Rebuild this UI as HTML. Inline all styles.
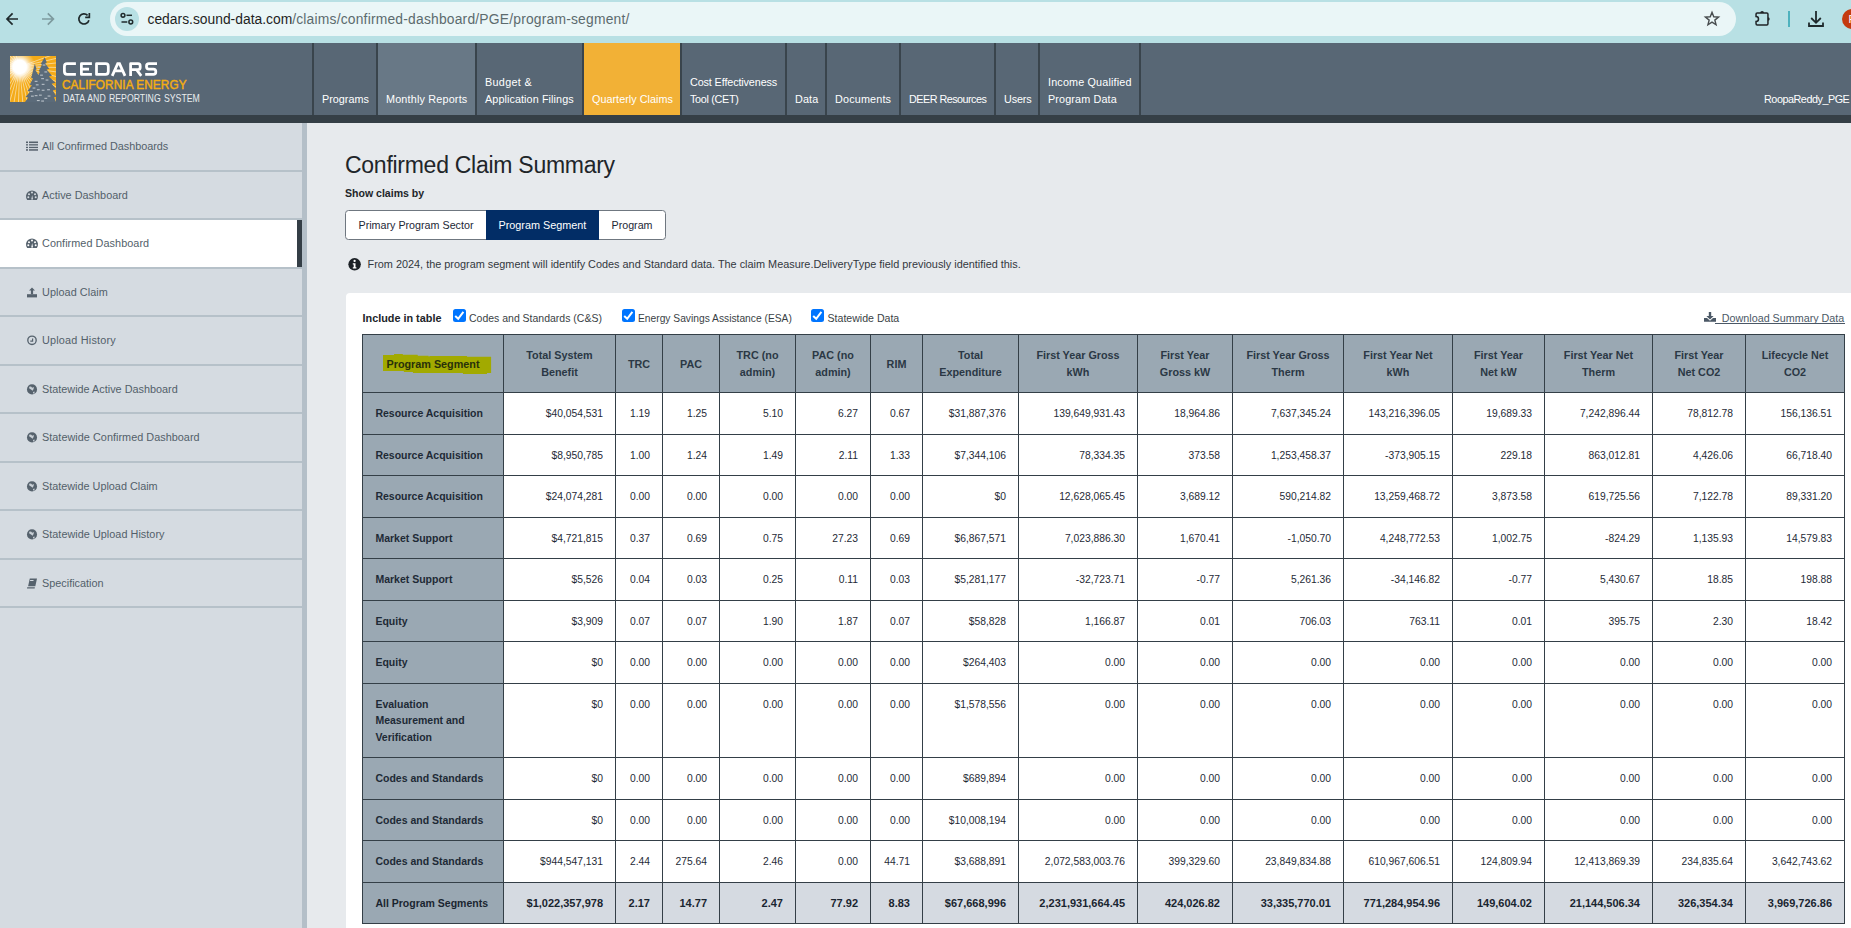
<!DOCTYPE html>
<html><head><meta charset="utf-8"><title>CEDARS - Confirmed Claim Summary</title>
<style>
*{box-sizing:border-box;margin:0;padding:0}
html,body{width:1851px;height:928px;overflow:hidden}
body{position:relative;background:#e7eaed;font-family:"Liberation Sans",sans-serif}
.a{position:absolute}
.t{position:absolute;white-space:nowrap;line-height:1}
svg{position:absolute;overflow:visible}
table.g{position:absolute;left:362px;top:334px;border-collapse:separate;border-spacing:0;table-layout:fixed;border-left:1px solid #343f47;border-top:1px solid #343f47;font-size:10.3px;color:#1e2a36}
table.g td,table.g th{border-right:1px solid #343f47;border-bottom:1px solid #343f47;padding:0;white-space:nowrap;overflow:hidden}
table.g th{background:#9aa8b3;font-weight:700;text-align:center;vertical-align:middle;line-height:17px;font-size:10.8px;color:#2b3845;padding-top:2px}
table.g th.two{padding-top:0}
table.g th:first-child{position:relative}
table.g td{text-align:right;vertical-align:top;line-height:17px;padding:11.76px 12px 0 0}
table.g td.h{background:#9aa8b3;font-weight:700;text-align:left;padding-left:12.4px;font-size:10.5px;color:#1e2a36;line-height:16.7px}
table.g tr.f td{background:#d5dae1;font-weight:700;font-size:11px;color:#1a2530}
table.g tr.f td.h{background:#9aa8b3;font-size:10.5px}
</style></head><body>

<div class="a" style="left:0px;top:0px;width:1851px;height:43px;background:#b8e0e4;"></div>
<div class="a" style="left:310px;top:34px;width:2px;height:2px;background:#1010ff;border-radius:1px;"></div>
<div class="a" style="left:110px;top:2px;width:1626px;height:34px;border-radius:17px;background:#eaf6f7"></div>
<svg style="left:0;top:0" width="100" height="42"><g fill="none" stroke-width="1.7"><path d="M7.2 19 H18 M12.6 13.4 L7 19 L12.6 24.6" stroke="#1f2a2c"/><path d="M42 19 H53.4 M47.8 13.4 L53.4 19 L47.8 24.6" stroke="#7d9a9e"/></g><g transform="translate(74 9)" fill="none" stroke="#1f2a2c" stroke-width="1.7"><path d="M13.6 6.3 A5.1 5.1 0 1 0 14.9 11.2"/><path d="M11.2 8.35 H15.35 V4.1"/></g></svg>
<div class="a" style="left:115px;top:7px;width:24px;height:24px;border-radius:12px;background:#b8e0e4"></div>
<svg style="left:115px;top:7px" width="24" height="24"><g fill="none" stroke="#1f2a2c" stroke-width="1.5"><circle cx="8" cy="8.3" r="1.9"/><path d="M11.5 8.3 H17"/><circle cx="15.8" cy="15" r="1.9"/><path d="M6.5 15 H12.3"/></g></svg>
<div class="t" style="left:147.50px;top:13.20px;font-size:13.85px;color:#1f1f1f;"><span style="color:#1f1f1f">cedars.sound-data.com</span><span style="color:#5c6b6e;letter-spacing:0.2px">/claims/confirmed-dashboard/PGE/program-segment/</span></div>
<svg style="left:1702px;top:9px" width="20" height="20"><polygon points="10.00,3.30 11.76,7.77 16.56,8.07 12.85,11.13 14.06,15.78 10.00,13.20 5.94,15.78 7.15,11.13 3.44,8.07 8.24,7.77" fill="none" stroke="#474c4e" stroke-width="1.4" stroke-linejoin="miter"/></svg>
<svg style="left:1750px;top:6px" width="25" height="25"><path d="M7.2 6.9 H16.8 Q17.95 6.9 17.95 8.05 V17.75 Q17.95 18.9 16.8 18.9 H7.2 Q6.05 18.9 6.05 17.75 V15.4 A2.45 2.45 0 0 0 6.05 10.5 V8.05 Q6.05 6.9 7.2 6.9 Z" fill="none" stroke="#1f2326" stroke-width="1.5"/><path d="M10.2 6.9 A1.9 1.9 0 0 1 14 6.9 Z M17.95 11.15 A1.75 1.75 0 0 1 17.95 14.65 Z" fill="#1f2326"/></svg>
<div class="a" style="left:1788px;top:11px;width:2px;height:16px;background:#4eb2be;"></div>
<svg style="left:1806px;top:9px" width="20" height="20"><g fill="none" stroke="#1f2a2c" stroke-width="1.8"><path d="M10 2 V13.5 M5.2 9 L10 13.8 L14.8 9"/><path d="M3 13.5 V17 H17 V13.5"/></g></svg>
<div class="a" style="left:1842px;top:9px;width:20px;height:20px;border-radius:10px;background:#c43a0f"></div>
<div class="t" style="left:1848.60px;top:13.68px;font-size:10.8px;color:#fff;">R</div>
<div class="a" style="left:0px;top:43px;width:1851px;height:72px;background:#586775;"></div>
<div class="a" style="left:0px;top:115px;width:1851px;height:8px;background:#353f46;"></div>
<svg style="left:10px;top:56px" width="46" height="46" viewBox="0 0 46 46">
<defs><radialGradient id="sun" cx="9.7" cy="10.8" r="16" gradientUnits="userSpaceOnUse"><stop offset="0" stop-color="#fff"/><stop offset="0.42" stop-color="#fff"/><stop offset="0.7" stop-color="#fff" stop-opacity="0.45"/><stop offset="1" stop-color="#fff" stop-opacity="0"/></radialGradient>
<clipPath id="lc"><rect width="46" height="46"/></clipPath></defs>
<g clip-path="url(#lc)">
<rect width="46" height="46" fill="#f4ab18"/>
<path d="M9.7 10.8 L75.5 -13.1 M9.7 10.8 L77.9 -4.9 M9.7 10.8 L79.3 3.5 M9.7 10.8 L79.7 12.0 M9.7 10.8 L79.0 20.5 M9.7 10.8 L77.3 28.9 M9.7 10.8 L74.6 37.0 M9.7 10.8 L70.9 44.7 M9.7 10.8 L66.3 51.9 M9.7 10.8 L60.9 58.5 M9.7 10.8 L54.7 64.4 M9.7 10.8 L47.8 69.5 M9.7 10.8 L40.4 73.7 M9.7 10.8 L32.5 77.0 M9.7 10.8 L24.3 79.3 M9.7 10.8 L15.8 80.5 M9.7 10.8 L7.3 80.8 M9.7 10.8 L-1.3 79.9 M9.7 10.8 L-9.6 78.1 M9.7 10.8 L-17.7 75.2 M9.7 10.8 L-25.3 71.4 M9.7 10.8 L-37.1 62.8 M9.7 10.8 L-46.9 51.9 M9.7 10.8 L-54.2 39.3 M9.7 10.8 L-58.8 25.4 M9.7 10.8 L-60.3 10.8 M9.7 10.8 L-58.8 -3.8 M9.7 10.8 L-54.2 -17.7 M9.7 10.8 L-46.9 -30.3 M9.7 10.8 L-37.1 -41.2 M9.7 10.8 L-25.3 -49.8 M9.7 10.8 L-11.9 -55.8" stroke="#fff" stroke-width="0.9" opacity="0.55"/>
<rect width="46" height="46" fill="url(#sun)"/>
<path d="M34.7 1.2 L36.8 6.5 L35.2 7.4 L39.2 12.8 L36.6 13.6 L42 19.8 L38.8 20.6 L45.5 26.8 L41.6 27.8 L46.5 33.4 L42.8 34.6 L46.5 40.5 L44 41.2 L46 46 L15 46 L18.2 41.6 L15.6 41 L20.2 35.6 L17.6 35 L21.8 29.4 L19.8 28.6 L23 22.6 L21.2 22 L24.8 7.8 L26.6 13.2 L25.4 14 L28.4 19 L29.8 15.8 L28.8 15 L32 8.6 L30.8 8 Z" fill="#5b6b7a"/>
<g fill="#c9d0d6" opacity="0.85"><rect x="30.1" y="18.6" width="2.8" height="1.1"/><rect x="31.2" y="22.1" width="2.8" height="1.1"/><rect x="24.7" y="24.8" width="2.8" height="1.1"/><rect x="34.4" y="15.4" width="2.8" height="1.1"/><rect x="25.8" y="28.3" width="2.8" height="1.1"/><rect x="31.7" y="27.8" width="2.8" height="1.1"/><rect x="26.9" y="33.2" width="2.8" height="1.1"/><rect x="31.7" y="33.7" width="2.8" height="1.1"/><rect x="37.1" y="33.2" width="2.8" height="1.1"/><rect x="21.0" y="39.6" width="2.8" height="1.1"/><rect x="24.7" y="39.1" width="2.8" height="1.1"/><rect x="29.0" y="38.6" width="2.8" height="1.1"/><rect x="34.4" y="41.8" width="2.8" height="1.1"/><rect x="26.9" y="44.0" width="2.8" height="1.1"/><rect x="31.2" y="44.5" width="2.8" height="1.1"/><rect x="19.9" y="34.8" width="2.8" height="1.1"/><rect x="35.6" y="23.5" width="2.8" height="1.1"/><rect x="22.6" y="31.5" width="2.8" height="1.1"/><rect x="37.6" y="39.5" width="2.8" height="1.1"/><rect x="27.6" y="10.5" width="2.8" height="1.1"/><rect x="32.6" y="8.5" width="2.8" height="1.1"/></g>
</g></svg>
<svg style="left:63px;top:62px" width="96" height="15"><g fill="none" stroke="#fff" stroke-width="2.75" stroke-linejoin="round"><path d="M12.9 1.7 H4.2 Q1.4 1.7 1.4 4.5 V9.6 Q1.4 12.4 4.2 12.4 H12.9"/><path d="M28.9 1.7 H18.4 V12.4 H28.9 M18.4 7.05 H26"/><path d="M33.5 1.7 H42.6 Q45.3 1.7 45.3 4.5 V9.6 Q45.3 12.4 42.6 12.4 H33.5 Z"/><path d="M49.2 13.9 L54.7 1.7 H56.5 L62 13.9 M51.6 8.9 H59.6" stroke-linejoin="miter"/><path d="M67.6 13.9 V1.7 H75 Q77.2 1.7 77.2 4 V5.4 Q77.2 7.6 75 7.6 H67.6 M73.5 7.6 L78.2 13.9"/><path d="M94 1.7 H86 Q83.5 1.7 83.5 4.1 V4.8 Q83.5 7.05 86 7.05 H90.3 Q92.8 7.05 92.8 9.5 V10 Q92.8 12.4 90.3 12.4 H82.2"/></g></svg>
<div class="t" style="left:62.00px;top:79.13px;font-size:12.6px;color:#f4ad12;-webkit-text-stroke:0.45px #f4ad12;letter-spacing:0.1px;transform:scaleX(0.935);transform-origin:0 0;">CALIFORNIA ENERGY</div>
<div class="t" style="left:62.60px;top:94.07px;font-size:10.4px;color:#e9ecee;word-spacing:1px;transform:scaleX(0.84);transform-origin:0 0;">DATA AND REPORTING SYSTEM</div>
<div class="t" style="left:322.00px;top:93.98px;font-size:10.8px;color:#ffffff;letter-spacing:0.000px;">Programs</div>
<div class="a" style="left:378px;top:43px;width:97px;height:72px;background:#687886;"></div>
<div class="t" style="left:386.00px;top:93.98px;font-size:10.8px;color:#ffffff;letter-spacing:0.186px;">Monthly Reports</div>
<div class="t" style="left:485.00px;top:76.98px;font-size:10.8px;color:#ffffff;letter-spacing:0.329px;">Budget &amp;</div>
<div class="t" style="left:485.00px;top:93.98px;font-size:10.8px;color:#ffffff;letter-spacing:0.089px;">Application Filings</div>
<div class="a" style="left:584px;top:43px;width:96px;height:72px;background:#f2b136;"></div>
<div class="t" style="left:592.00px;top:93.98px;font-size:10.8px;color:#ffffff;letter-spacing:0.027px;">Quarterly Claims</div>
<div class="t" style="left:690.00px;top:76.98px;font-size:10.8px;color:#ffffff;letter-spacing:-0.118px;">Cost Effectiveness</div>
<div class="t" style="left:690.00px;top:93.98px;font-size:10.8px;color:#ffffff;letter-spacing:-0.300px;">Tool (CET)</div>
<div class="t" style="left:795.00px;top:93.98px;font-size:10.8px;color:#ffffff;letter-spacing:0.133px;">Data</div>
<div class="t" style="left:835.00px;top:93.98px;font-size:10.8px;color:#ffffff;letter-spacing:0.175px;">Documents</div>
<div class="t" style="left:909.00px;top:93.98px;font-size:10.8px;color:#ffffff;letter-spacing:-0.523px;">DEER Resources</div>
<div class="t" style="left:1004.00px;top:93.98px;font-size:10.8px;color:#ffffff;letter-spacing:-0.150px;">Users</div>
<div class="t" style="left:1048.00px;top:76.98px;font-size:10.8px;color:#ffffff;letter-spacing:0.160px;">Income Qualified</div>
<div class="t" style="left:1048.00px;top:93.98px;font-size:10.8px;color:#ffffff;letter-spacing:0.136px;">Program Data</div>
<div class="a" style="left:312px;top:43px;width:2px;height:72px;background:#39444c;"></div>
<div class="a" style="left:376px;top:43px;width:2px;height:72px;background:#39444c;"></div>
<div class="a" style="left:475px;top:43px;width:2px;height:72px;background:#39444c;"></div>
<div class="a" style="left:582px;top:43px;width:2px;height:72px;background:#39444c;"></div>
<div class="a" style="left:680px;top:43px;width:2px;height:72px;background:#39444c;"></div>
<div class="a" style="left:785px;top:43px;width:2px;height:72px;background:#39444c;"></div>
<div class="a" style="left:825px;top:43px;width:2px;height:72px;background:#39444c;"></div>
<div class="a" style="left:899px;top:43px;width:2px;height:72px;background:#39444c;"></div>
<div class="a" style="left:994px;top:43px;width:2px;height:72px;background:#39444c;"></div>
<div class="a" style="left:1038px;top:43px;width:2px;height:72px;background:#39444c;"></div>
<div class="a" style="left:1139px;top:43px;width:2px;height:72px;background:#39444c;"></div>
<div class="t" style="left:1764.00px;top:93.98px;font-size:10.8px;color:#ffffff;letter-spacing:-0.462px;">RoopaReddy_PGE</div>
<div class="a" style="left:0px;top:123px;width:302px;height:805px;background:#d5dbe1;"></div>
<div class="a" style="left:302px;top:123px;width:5px;height:805px;background:#b4bfc8;"></div>
<div class="a" style="left:0px;top:170px;width:302px;height:2px;background:#b6c1c9;"></div>
<div class="t" style="left:42.00px;top:140.99px;font-size:10.85px;color:#535f6a;letter-spacing:-0.013px;">All Confirmed Dashboards</div>
<svg style="left:26px;top:140.5px" width="12" height="11"><g fill="#56626d"><rect x="0" y="0.5" width="2" height="1.6"/><rect x="3" y="0.5" width="9" height="1.6"/><rect x="0" y="3.2" width="2" height="1.3"/><rect x="3" y="3.2" width="9" height="1.3"/><rect x="0" y="5.8" width="2" height="1.3"/><rect x="3" y="5.8" width="9" height="1.3"/><rect x="0" y="8.2" width="2" height="1.5"/><rect x="3" y="8.2" width="9" height="1.5"/></g></svg>
<div class="a" style="left:0px;top:218px;width:302px;height:2px;background:#b6c1c9;"></div>
<div class="t" style="left:42.00px;top:189.99px;font-size:10.85px;color:#535f6a;letter-spacing:0.020px;">Active Dashboard</div>
<svg style="left:26px;top:189.5px" width="12" height="11"><path d="M1.2 10 A6 6 0 1 1 10.8 10 Z" fill="#56626d"/><g fill="#d5dbe1"><circle cx="6" cy="2.6" r="1"/><circle cx="3" cy="4.3" r="1"/><circle cx="9" cy="4.3" r="1"/><circle cx="2.3" cy="7.2" r="1"/><circle cx="9.7" cy="7.2" r="1"/><path d="M5.2 9.6 L6.2 5 L7 9.6 Z"/></g></svg>
<div class="a" style="left:0px;top:220px;width:297px;height:47px;background:#ffffff;"></div>
<div class="a" style="left:297px;top:220px;width:5px;height:47px;background:#343e46;"></div>
<div class="a" style="left:0px;top:267px;width:302px;height:2px;background:#b6c1c9;"></div>
<div class="t" style="left:42.00px;top:237.99px;font-size:10.85px;color:#535f6a;letter-spacing:0.056px;">Confirmed Dashboard</div>
<svg style="left:26px;top:237.5px" width="12" height="11"><path d="M1.2 10 A6 6 0 1 1 10.8 10 Z" fill="#56626d"/><g fill="#ffffff"><circle cx="6" cy="2.6" r="1"/><circle cx="3" cy="4.3" r="1"/><circle cx="9" cy="4.3" r="1"/><circle cx="2.3" cy="7.2" r="1"/><circle cx="9.7" cy="7.2" r="1"/><path d="M5.2 9.6 L6.2 5 L7 9.6 Z"/></g></svg>
<div class="a" style="left:0px;top:315px;width:302px;height:2px;background:#b6c1c9;"></div>
<div class="t" style="left:42.00px;top:286.99px;font-size:10.85px;color:#535f6a;letter-spacing:0.064px;">Upload Claim</div>
<svg style="left:26px;top:286.5px" width="12" height="11"><g fill="#56626d"><path d="M6 0.5 L9 3.6 H7.1 V7.2 H4.9 V3.6 H3 Z"/><rect x="1" y="7.2" width="10" height="3.2"/></g></svg>
<div class="a" style="left:0px;top:364px;width:302px;height:2px;background:#b6c1c9;"></div>
<div class="t" style="left:42.00px;top:334.99px;font-size:10.85px;color:#535f6a;letter-spacing:0.200px;">Upload History</div>
<svg style="left:26px;top:334.5px" width="12" height="11"><circle cx="6" cy="5.3" r="4.2" fill="none" stroke="#56626d" stroke-width="1.35"/><path d="M6.6 3.4 V6.2 H4.3" fill="none" stroke="#56626d" stroke-width="1.2"/></svg>
<div class="a" style="left:0px;top:412px;width:302px;height:2px;background:#b6c1c9;"></div>
<div class="t" style="left:42.00px;top:383.99px;font-size:10.85px;color:#535f6a;letter-spacing:0.004px;">Statewide Active Dashboard</div>
<svg style="left:26px;top:383.5px" width="12" height="11"><circle cx="6" cy="5.4" r="5.05" fill="#56626d"/><path d="M3.1 2.8 L5 2.6 L6.2 3.8 L7.9 3 L7.6 5 L6.6 6.8 L5 5.6 L3.3 4.6 Z M7 8 L8.6 7.6 L8.4 9.4 L7.2 9.6 Z" fill="#d5dbe1" opacity="0.9"/></svg>
<div class="a" style="left:0px;top:461px;width:302px;height:2px;background:#b6c1c9;"></div>
<div class="t" style="left:42.00px;top:431.99px;font-size:10.85px;color:#535f6a;letter-spacing:0.032px;">Statewide Confirmed Dashboard</div>
<svg style="left:26px;top:431.5px" width="12" height="11"><circle cx="6" cy="5.4" r="5.05" fill="#56626d"/><path d="M3.1 2.8 L5 2.6 L6.2 3.8 L7.9 3 L7.6 5 L6.6 6.8 L5 5.6 L3.3 4.6 Z M7 8 L8.6 7.6 L8.4 9.4 L7.2 9.6 Z" fill="#d5dbe1" opacity="0.9"/></svg>
<div class="a" style="left:0px;top:509px;width:302px;height:2px;background:#b6c1c9;"></div>
<div class="t" style="left:42.00px;top:480.99px;font-size:10.85px;color:#535f6a;letter-spacing:-0.005px;">Statewide Upload Claim</div>
<svg style="left:26px;top:480.5px" width="12" height="11"><circle cx="6" cy="5.4" r="5.05" fill="#56626d"/><path d="M3.1 2.8 L5 2.6 L6.2 3.8 L7.9 3 L7.6 5 L6.6 6.8 L5 5.6 L3.3 4.6 Z M7 8 L8.6 7.6 L8.4 9.4 L7.2 9.6 Z" fill="#d5dbe1" opacity="0.9"/></svg>
<div class="a" style="left:0px;top:558px;width:302px;height:2px;background:#b6c1c9;"></div>
<div class="t" style="left:42.00px;top:528.99px;font-size:10.85px;color:#535f6a;letter-spacing:0.030px;">Statewide Upload History</div>
<svg style="left:26px;top:528.5px" width="12" height="11"><circle cx="6" cy="5.4" r="5.05" fill="#56626d"/><path d="M3.1 2.8 L5 2.6 L6.2 3.8 L7.9 3 L7.6 5 L6.6 6.8 L5 5.6 L3.3 4.6 Z M7 8 L8.6 7.6 L8.4 9.4 L7.2 9.6 Z" fill="#d5dbe1" opacity="0.9"/></svg>
<div class="a" style="left:0px;top:606px;width:302px;height:2px;background:#b6c1c9;"></div>
<div class="t" style="left:42.00px;top:577.99px;font-size:10.85px;color:#535f6a;letter-spacing:0.008px;">Specification</div>
<svg style="left:26px;top:577.5px" width="12" height="11"><path d="M3.8 0.6 H11 L9.3 8.3 H2.1 Z" fill="#56626d"/><rect x="4.6" y="1.9" width="3.4" height="1" fill="#d5dbe1" transform="skewX(-12)"/><path d="M1.2 9.3 H8.9 L8.7 10.4 H1 Z" fill="#56626d"/></svg>
<div class="t" style="left:345.00px;top:154.46px;font-size:23px;color:#212529;letter-spacing:-0.27px;">Confirmed Claim Summary</div>
<div class="t" style="left:345.00px;top:187.99px;font-size:10.55px;color:#212529;font-weight:700;">Show claims by</div>
<div class="a" style="left:345px;top:210px;width:321px;height:30px;border:1px solid #6f7780;border-radius:3.5px;background:#fff"></div>
<div class="a" style="left:486px;top:210px;width:113px;height:30px;background:#022d66;"></div>
<div class="t" style="left:358.50px;top:220.00px;font-size:10.72px;color:#1d2736;">Primary Program Sector</div>
<div class="t" style="left:498.50px;top:220.00px;font-size:10.84px;color:#ffffff;">Program Segment</div>
<div class="t" style="left:611.50px;top:219.98px;font-size:10.69px;color:#1d2736;">Program</div>
<svg style="left:348px;top:258px" width="13" height="13"><circle cx="6.6" cy="6.3" r="6.25" fill="#1c2126"/><circle cx="6.6" cy="2.9" r="1.15" fill="#fff"/><path d="M4.8 5.3 H7.5 V9.3 H8.4 V10.5 H4.8 V9.3 H5.7 V6.5 H4.8 Z" fill="#fff"/></svg>
<div class="t" style="left:367.50px;top:259.01px;font-size:10.89px;color:#33383e;">From 2024, the program segment will identify Codes and Standard data. The claim Measure.DeliveryType field previously identified this.</div>
<div class="a" style="left:346px;top:293px;width:1520px;height:700px;background:#fff;border-radius:4px"></div>
<div class="t" style="left:362.50px;top:312.99px;font-size:10.85px;color:#212529;font-weight:700;">Include in table</div>
<svg style="left:453px;top:309px" width="13" height="13"><rect x="0" y="0" width="13" height="13" rx="2.5" fill="#0075ff"/><path d="M2.2 7.0 L5.2 9.8 L10.4 2.9" fill="none" stroke="#fff" stroke-width="2"/></svg>
<div class="t" style="left:469.00px;top:313.82px;font-size:10.49px;color:#3a3f45;">Codes and Standards (C&amp;S)</div>
<svg style="left:622px;top:309px" width="13" height="13"><rect x="0" y="0" width="13" height="13" rx="2.5" fill="#0075ff"/><path d="M2.2 7.0 L5.2 9.8 L10.4 2.9" fill="none" stroke="#fff" stroke-width="2"/></svg>
<div class="t" style="left:638.00px;top:313.91px;font-size:10.26px;color:#3a3f45;">Energy Savings Assistance (ESA)</div>
<svg style="left:811px;top:309px" width="13" height="13"><rect x="0" y="0" width="13" height="13" rx="2.5" fill="#0075ff"/><path d="M2.2 7.0 L5.2 9.8 L10.4 2.9" fill="none" stroke="#fff" stroke-width="2"/></svg>
<div class="t" style="left:827.50px;top:313.02px;font-size:10.58px;color:#3a3f45;">Statewide Data</div>
<svg style="left:1704px;top:312px" width="12" height="10"><g fill="#4b5866"><path d="M4.8 0 H7.2 V4 H9.6 L6 7.6 L2.4 4 H4.8 Z"/><path d="M0 6 H3 L6 8.8 L9 6 H12 V9.8 H0 Z"/></g></svg>
<div class="a" style="left:1715px;top:323px;width:130px;height:1px;background:#4b5866;"></div>
<div class="t" style="left:1721.80px;top:312.68px;font-size:10.75px;color:#4b5866;">Download Summary Data</div>
<table class="g" style="width:1483px"><colgroup><col style="width:141px"><col style="width:112px"><col style="width:47px"><col style="width:57px"><col style="width:76px"><col style="width:75px"><col style="width:52px"><col style="width:96px"><col style="width:119px"><col style="width:95px"><col style="width:111px"><col style="width:109px"><col style="width:92px"><col style="width:108px"><col style="width:93px"><col style="width:99px"></colgroup>
<thead><tr style="height:58px"><th><svg style="position:absolute;left:0;top:0" width="140" height="57"><polygon points="20.0,20.1 30.9,20.1 31.2,19.1 39.7,19.1 40.0,19.8 54.5,19.8 54.9,20.8 65.3,20.8 66.0,21.8 66.7,21.0 103.8,21.0 104.2,21.8 128.1,21.8 128.1,38.0 124.1,38.0 123.8,39.0 100.1,39.0 99.8,38.0 50.1,38.0 49.8,37.0 41.0,37.0 40.7,36.0 20.0,36.0" fill="#a2aa00"/></svg><span style="position:relative;color:#28310a">Program Segment</span></th><th class="two">Total System<br>Benefit</th><th>TRC</th><th>PAC</th><th class="two">TRC (no<br>admin)</th><th class="two">PAC (no<br>admin)</th><th>RIM</th><th class="two">Total<br>Expenditure</th><th class="two">First Year Gross<br>kWh</th><th class="two">First Year<br>Gross kW</th><th class="two">First Year Gross<br>Therm</th><th class="two">First Year Net<br>kWh</th><th class="two">First Year<br>Net kW</th><th class="two">First Year Net<br>Therm</th><th class="two">First Year<br>Net CO2</th><th class="two">Lifecycle Net<br>CO2</th></tr></thead><tbody>
<tr style="height:42px"><td class="h">Resource Acquisition</td><td>$40,054,531</td><td>1.19</td><td>1.25</td><td>5.10</td><td>6.27</td><td>0.67</td><td>$31,887,376</td><td>139,649,931.43</td><td>18,964.86</td><td>7,637,345.24</td><td>143,216,396.05</td><td>19,689.33</td><td>7,242,896.44</td><td>78,812.78</td><td>156,136.51</td></tr>
<tr style="height:41px"><td class="h">Resource Acquisition</td><td>$8,950,785</td><td>1.00</td><td>1.24</td><td>1.49</td><td>2.11</td><td>1.33</td><td>$7,344,106</td><td>78,334.35</td><td>373.58</td><td>1,253,458.37</td><td>-373,905.15</td><td>229.18</td><td>863,012.81</td><td>4,426.06</td><td>66,718.40</td></tr>
<tr style="height:42px"><td class="h">Resource Acquisition</td><td>$24,074,281</td><td>0.00</td><td>0.00</td><td>0.00</td><td>0.00</td><td>0.00</td><td>$0</td><td>12,628,065.45</td><td>3,689.12</td><td>590,214.82</td><td>13,259,468.72</td><td>3,873.58</td><td>619,725.56</td><td>7,122.78</td><td>89,331.20</td></tr>
<tr style="height:41px"><td class="h">Market Support</td><td>$4,721,815</td><td>0.37</td><td>0.69</td><td>0.75</td><td>27.23</td><td>0.69</td><td>$6,867,571</td><td>7,023,886.30</td><td>1,670.41</td><td>-1,050.70</td><td>4,248,772.53</td><td>1,002.75</td><td>-824.29</td><td>1,135.93</td><td>14,579.83</td></tr>
<tr style="height:42px"><td class="h">Market Support</td><td>$5,526</td><td>0.04</td><td>0.03</td><td>0.25</td><td>0.11</td><td>0.03</td><td>$5,281,177</td><td>-32,723.71</td><td>-0.77</td><td>5,261.36</td><td>-34,146.82</td><td>-0.77</td><td>5,430.67</td><td>18.85</td><td>198.88</td></tr>
<tr style="height:41px"><td class="h">Equity</td><td>$3,909</td><td>0.07</td><td>0.07</td><td>1.90</td><td>1.87</td><td>0.07</td><td>$58,828</td><td>1,166.87</td><td>0.01</td><td>706.03</td><td>763.11</td><td>0.01</td><td>395.75</td><td>2.30</td><td>18.42</td></tr>
<tr style="height:42px"><td class="h">Equity</td><td>$0</td><td>0.00</td><td>0.00</td><td>0.00</td><td>0.00</td><td>0.00</td><td>$264,403</td><td>0.00</td><td>0.00</td><td>0.00</td><td>0.00</td><td>0.00</td><td>0.00</td><td>0.00</td><td>0.00</td></tr>
<tr style="height:74px"><td class="h">Evaluation<br>Measurement and<br>Verification</td><td>$0</td><td>0.00</td><td>0.00</td><td>0.00</td><td>0.00</td><td>0.00</td><td>$1,578,556</td><td>0.00</td><td>0.00</td><td>0.00</td><td>0.00</td><td>0.00</td><td>0.00</td><td>0.00</td><td>0.00</td></tr>
<tr style="height:42px"><td class="h">Codes and Standards</td><td>$0</td><td>0.00</td><td>0.00</td><td>0.00</td><td>0.00</td><td>0.00</td><td>$689,894</td><td>0.00</td><td>0.00</td><td>0.00</td><td>0.00</td><td>0.00</td><td>0.00</td><td>0.00</td><td>0.00</td></tr>
<tr style="height:41px"><td class="h">Codes and Standards</td><td>$0</td><td>0.00</td><td>0.00</td><td>0.00</td><td>0.00</td><td>0.00</td><td>$10,008,194</td><td>0.00</td><td>0.00</td><td>0.00</td><td>0.00</td><td>0.00</td><td>0.00</td><td>0.00</td><td>0.00</td></tr>
<tr style="height:42px"><td class="h">Codes and Standards</td><td>$944,547,131</td><td>2.44</td><td>275.64</td><td>2.46</td><td>0.00</td><td>44.71</td><td>$3,688,891</td><td>2,072,583,003.76</td><td>399,329.60</td><td>23,849,834.88</td><td>610,967,606.51</td><td>124,809.94</td><td>12,413,869.39</td><td>234,835.64</td><td>3,642,743.62</td></tr>
<tr class="f" style="height:41px"><td class="h">All Program Segments</td><td>$1,022,357,978</td><td>2.17</td><td>14.77</td><td>2.47</td><td>77.92</td><td>8.83</td><td>$67,668,996</td><td>2,231,931,664.45</td><td>424,026.82</td><td>33,335,770.01</td><td>771,284,954.96</td><td>149,604.02</td><td>21,144,506.34</td><td>326,354.34</td><td>3,969,726.86</td></tr>
</tbody></table>
</body></html>
